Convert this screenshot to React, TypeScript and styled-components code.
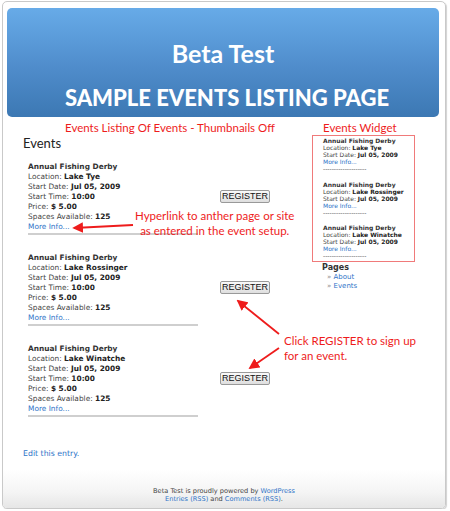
import React from 'react'
import styled, { createGlobalStyle } from 'styled-components'

const GlobalStyle = createGlobalStyle`
  html, body {
    margin: 0;
    padding: 0;
    background: #ffffff;
  }
`

const Frame = styled.div`
  position: relative;
  box-sizing: border-box;
  width: 444px;
  height: 508px;
  margin: 1px 4px 0 2px;
  border: 1px solid #c9c9c9;
  border-radius: 5px;
  box-shadow: 1px 1px 1px rgba(0, 0, 0, 0.18);
  display: flex;
  flex-direction: column;
  overflow: hidden;
  font-family: 'DejaVu Sans', Verdana, sans-serif;
`

const Header = styled.div`
  height: 109px;
  margin: 6px 6px 0 4px;
  border-radius: 5px;
  background: linear-gradient(180deg, #67abe8 0%, #4f8ccb 55%, #3c78b3 100%);
  display: flex;
  flex-direction: column;
  align-items: center;
  padding-top: 31px;
  box-sizing: border-box;
  color: #ffffff;
  font-family: Lato, 'Open Sans', sans-serif;
`

const SiteTitle = styled.div`
  font-size: 25px;
  line-height: 28px;
  font-weight: 700;
`

const SiteSubtitle = styled.div`
  margin: 18px 0 0 8px;
  font-size: 22px;
  line-height: 26px;
  font-weight: 900;
`

const Body = styled.div`
  display: flex;
  padding-left: 20px;
`

const Main = styled.div`
  width: 289px;
  padding-top: 18px;
`

const PageHeading = styled.h2`
  margin: 0 0 11px;
  font-family: Lato, 'Open Sans', sans-serif;
  font-size: 13px;
  line-height: 16px;
  font-weight: 400;
  color: #222;
`

const EventRow = styled.div`
  display: flex;
  align-items: center;
  margin-bottom: 18px;
`

const EventInfo = styled.div`
  width: 170px;
  margin-left: 5px;
  padding-bottom: 1px;
  border-bottom: 2px solid #cfcfcf;
  font-size: 7.4px;
  line-height: 10px;
  color: #444;
`

const Title = styled.div`
  font-weight: 700;
  color: #333;
`

const Value = styled.b`
  color: #222;
`

const Link = styled.a`
  color: #2f74c8;
  text-decoration: none;
`

const RegisterButton = styled.button`
  width: 50px;
  height: 13px;
  margin: 0 0 5px 22px;
  padding: 0;
  border: 1px solid #999;
  border-radius: 2px;
  background: linear-gradient(180deg, #fafafa 0%, #dedede 100%);
  font-family: 'Liberation Sans', Arial, sans-serif;
  font-size: 9px;
  line-height: 11px;
  color: #111;
`

const EditLink = styled(Link)`
  display: block;
  margin-top: 32px;
  font-size: 7.8px;
  line-height: 10px;
`

const Sidebar = styled.div`
  width: 103px;
  padding-top: 18px;
`

const WidgetBox = styled.div`
  border: 1px solid #f07a7a;
  padding: 1px 0 2px 10px;
  font-size: 6px;
  line-height: 7px;
  color: #444;
`

const WidgetEntry = styled.div`
  margin-bottom: 8.5px;
  &:last-child {
    margin-bottom: 0;
  }
`

const PagesHeading = styled.div`
  margin: 1px 0 0 10px;
  font-size: 8px;
  line-height: 10px;
  font-weight: 700;
  color: #333;
`

const PagesList = styled.ul`
  list-style: none;
  margin: 0 0 0 15px;
  padding: 0;
  font-size: 7px;
  line-height: 9px;
  color: #888;
`

const Footer = styled.div`
  margin-top: auto;
  height: 38px;
  padding-top: 17px;
  box-sizing: border-box;
  background: linear-gradient(180deg, #ffffff 0%, #f4f4f4 60%, #e6e6e6 100%);
  text-align: center;
  font-size: 6.6px;
  line-height: 8px;
  color: #444;
`

const Note = styled.div<{ $x: number; $y: number; $align?: string }>`
  position: absolute;
  left: ${p => p.$x}px;
  top: ${p => p.$y}px;
  text-align: ${p => p.$align || 'left'};
  font-family: Lato, 'Open Sans', sans-serif;
  font-size: 11.5px;
  line-height: 15px;
  color: #ee1c1c;
  white-space: nowrap;
`

const ArrowLayer = styled.svg`
  position: absolute;
  left: -3px;
  top: -2px;
  pointer-events: none;
`

const events = ['Lake Tye', 'Lake Rossinger', 'Lake Winatche']

const Arrow = ({ x1, y1, x2, y2 }: { x1: number; y1: number; x2: number; y2: number }) => (
  <line x1={x1} y1={y1} x2={x2} y2={y2} stroke="#ee1c1c" strokeWidth={1.8} markerEnd="url(#head)" />
)

const App = () => (
  <>
    <GlobalStyle />
    <Frame>
      <Header>
        <SiteTitle>Beta Test</SiteTitle>
        <SiteSubtitle>SAMPLE EVENTS LISTING PAGE</SiteSubtitle>
      </Header>
      <Body>
        <Main>
          <PageHeading>Events</PageHeading>
          {events.map(place => (
            <EventRow key={place}>
              <EventInfo>
                <Title>Annual Fishing Derby</Title>
                <div>Location: <Value>{place}</Value></div>
                <div>Start Date: <Value>Jul 05, 2009</Value></div>
                <div>Start Time: <Value>10:00</Value></div>
                <div>Price: <Value>$ 5.00</Value></div>
                <div>Spaces Available: <Value>125</Value></div>
                <Link href="#">More Info...</Link>
              </EventInfo>
              <RegisterButton>REGISTER</RegisterButton>
            </EventRow>
          ))}
          <EditLink href="#">Edit this entry.</EditLink>
        </Main>
        <Sidebar>
          <WidgetBox>
            {events.map(place => (
              <WidgetEntry key={place}>
                <Title>Annual Fishing Derby</Title>
                <div>Location: <Value>{place}</Value></div>
                <div>Start Date: <Value>Jul 05, 2009</Value></div>
                <Link href="#">More Info...</Link>
                <div>--------------------</div>
              </WidgetEntry>
            ))}
          </WidgetBox>
          <PagesHeading>Pages</PagesHeading>
          <PagesList>
            <li>» <Link href="#">About</Link></li>
            <li>» <Link href="#">Events</Link></li>
          </PagesList>
        </Sidebar>
      </Body>
      <Footer>
        <div>Beta Test is proudly powered by <Link href="#">WordPress</Link></div>
        <div><Link href="#">Entries (RSS)</Link> and <Link href="#">Comments (RSS)</Link>.</div>
      </Footer>

      <Note $x={62} $y={118}>Events Listing Of Events - Thumbnails Off</Note>
      <Note $x={320} $y={118}>Events Widget</Note>
      <Note $x={132} $y={206} $align="center">
        Hyperlink to anther page or site<br />as entered in the event setup.
      </Note>
      <Note $x={281} $y={331}>
        Click REGISTER to sign up<br />for an event.
      </Note>
      <ArrowLayer width="450" height="511" viewBox="0 0 450 511">
        <defs>
          <marker id="head" markerWidth="6" markerHeight="6" refX="5" refY="3" orient="auto" markerUnits="strokeWidth">
            <path d="M0,0 L6,3 L0,6 Z" fill="#ee1c1c" />
          </marker>
        </defs>
        <Arrow x1={133} y1={225} x2={74} y2={228} />
        <Arrow x1={279} y1={334} x2={238} y2={301} />
        <Arrow x1={279} y1={348} x2={250} y2={368} />
      </ArrowLayer>
    </Frame>
  </>
)

export default App
